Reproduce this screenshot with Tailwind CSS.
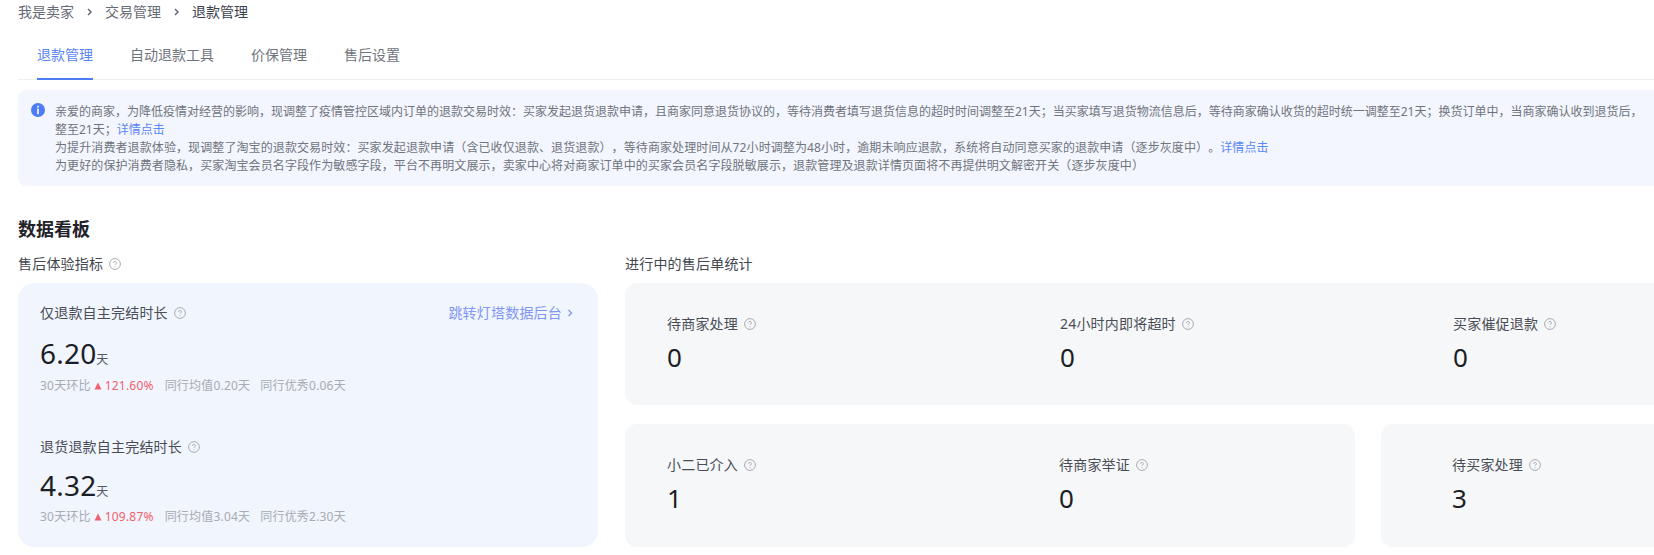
<!doctype html>
<html lang="zh">
<head>
<meta charset="utf-8">
<script src="https://cdn.jsdelivr.net/npm/@tailwindcss/browser@4"></script>
</head>
<body class="bg-white overflow-hidden h-[555px] w-[1654px] font-['Noto_Sans','Noto_Sans_CJK_SC',sans-serif]">
<div class="w-[1900px] pl-[18px]">
  <nav class="h-6 flex items-center gap-[11px] text-sm text-[#666b76]">
    <span>我是卖家</span>
    <svg class="w-[9px] h-[10px]" viewBox="0 0 9 10" fill="none" stroke="currentColor" stroke-width="1.5"><path d="M3 2l3 3-3 3"/></svg>
    <span>交易管理</span>
    <svg class="w-[9px] h-[10px]" viewBox="0 0 9 10" fill="none" stroke="currentColor" stroke-width="1.5"><path d="M3 2l3 3-3 3"/></svg>
    <span class="text-[#3d4250]">退款管理</span>
  </nav>
  <div class="mt-[7px] h-[49px] flex gap-[37px] pl-[19px] border-b border-[#eeeff1] text-sm text-[#70747d]">
    <span class="h-[49px] pt-[14px] border-b-2 border-[#4d7cf5] text-[#5b86f5]">退款管理</span>
    <span class="pt-[14px]">自动退款工具</span>
    <span class="pt-[14px]">价保管理</span>
    <span class="pt-[14px]">售后设置</span>
  </div>
  <div class="mt-[10px] h-24 rounded-lg bg-[#f3f6fe] flex text-xs leading-[18px] text-[#70747d]">
    <svg class="ml-[13px] mt-[13px] w-[14px] h-[14px] shrink-0" viewBox="0 0 14 14"><circle cx="7" cy="7" r="7" fill="#4d7cf5"/><rect x="6.2" y="2.8" width="1.6" height="1.7" fill="#fff"/><rect x="6.2" y="5.6" width="1.6" height="5.6" fill="#fff"/></svg>
    <div class="ml-[10px] pt-[13px] w-[1700px] [text-spacing-trim:space-all]">
      <div class="whitespace-nowrap">亲爱的商家&#65292;为降低疫情对经营的影响&#65292;现调整了疫情管控区域内订单的退款交易时效&#65306;买家发起退货退款申请&#65292;且商家同意退货协议的&#65292;等待消费者填写退货信息的超时时间调整至21天&#65307;当买家填写退货物流信息后&#65292;等待商家确认收货的超时统一调整至21天&#65307;换货订单中&#65292;当商家确认收到退货后&#65292;</div>
      <div>整至21天&#65307;<span class="text-[#5b86f5]">详情点击</span></div>
      <div class="tracking-[0.1px]">为提升消费者退款体验&#65292;现调整了淘宝的退款交易时效&#65306;买家发起退款申请&#65288;含已收仅退款、退货退款&#65289;&#65292;等待商家处理时间从72小时调整为48小时&#65292;逾期未响应退款&#65292;系统将自动同意买家的退款申请&#65288;逐步灰度中&#65289;。<span class="text-[#5b86f5]">详情点击</span></div>
      <div class="tracking-[0.1px]">为更好的保护消费者隐私&#65292;买家淘宝会员名字段作为敏感字段&#65292;平台不再明文展示&#65292;卖家中心将对商家订单中的买家会员名字段脱敏展示&#65292;退款管理及退款详情页面将不再提供明文解密开关&#65288;逐步灰度中&#65289;</div>
    </div>
  </div>
  <h2 class="mt-[31px] text-lg leading-6 font-bold text-[#1f2229]">数据看板</h2>
  <div class="mt-[13px] flex gap-[27px] tracking-[0.2px]">
    <section class="w-[580px] shrink-0">
      <div class="h-5 flex items-center gap-[6px] text-sm text-[#43464f]">售后体验指标
        <svg class="w-3 h-3 text-[#a9acb3]" viewBox="0 0 12 12" fill="none" stroke="currentColor"><circle cx="6" cy="6" r="5.4"/><path d="M4.6 4.8a1.4 1.4 0 1 1 2.1 1.2c-.5.3-.7.5-.7 1.1M6 8.3v.9"/></svg>
      </div>
      <div class="mt-[9px] h-[264px] rounded-2xl bg-[#f1f5fe] px-[22px] pt-[20px]">
        <div class="flex justify-between h-5 items-center text-sm">
          <span class="flex items-center gap-[6px] text-[#4a4d56]">仅退款自主完结时长
            <svg class="w-3 h-3 text-[#a9acb3]" viewBox="0 0 12 12" fill="none" stroke="currentColor"><circle cx="6" cy="6" r="5.4"/><path d="M4.6 4.8a1.4 1.4 0 1 1 2.1 1.2c-.5.3-.7.5-.7 1.1M6 8.3v.9"/></svg>
          </span>
          <span class="flex items-center gap-[4px] text-[#7f96f2]">跳转灯塔数据后台
            <svg class="w-2 h-2 mr-[2px]" viewBox="0 0 8 8" fill="none" stroke="currentColor" stroke-width="1.3"><path d="M2.5 1l3 3-3 3"/></svg>
          </span>
        </div>
        <div class="mt-[9px] h-[42px] flex items-baseline text-[#1b1e25]"><span class="text-[28px] leading-[42px]">6.20</span><span class="text-xs text-[#55585f]">天</span></div>
        <div class="mt-[2px] h-5 flex items-center text-xs text-[#a8abb2]">30天环比
          <svg class="mx-[3px] w-2 h-2" viewBox="0 0 8 8"><path d="M4 0.5L7.5 7.5H0.5z" fill="#f0616d"/></svg>
          <span class="text-[#f0616d]">121.60%</span><span class="ml-[11px]">同行均值0.20天</span><span class="ml-[10px]">同行优秀0.06天</span>
        </div>
        <div class="mt-[41px] h-5 flex items-center gap-[6px] text-sm text-[#4a4d56]">退货退款自主完结时长
          <svg class="w-3 h-3 text-[#a9acb3]" viewBox="0 0 12 12" fill="none" stroke="currentColor"><circle cx="6" cy="6" r="5.4"/><path d="M4.6 4.8a1.4 1.4 0 1 1 2.1 1.2c-.5.3-.7.5-.7 1.1M6 8.3v.9"/></svg>
        </div>
        <div class="mt-[7px] h-[42px] flex items-baseline text-[#1b1e25]"><span class="text-[28px] leading-[42px]">4.32</span><span class="text-xs text-[#55585f]">天</span></div>
        <div class="mt-[1px] h-5 flex items-center text-xs text-[#a8abb2]">30天环比
          <svg class="mx-[3px] w-2 h-2" viewBox="0 0 8 8"><path d="M4 0.5L7.5 7.5H0.5z" fill="#f0616d"/></svg>
          <span class="text-[#f0616d]">109.87%</span><span class="ml-[11px]">同行均值3.04天</span><span class="ml-[10px]">同行优秀2.30天</span>
        </div>
      </div>
    </section>
    <section class="flex-1">
      <div class="h-5 flex items-center text-sm text-[#43464f]">进行中的售后单统计</div>
      <div class="mt-[9px] h-[122px] rounded-xl bg-[#f6f7f9] pl-[42px] pt-[31px] grid grid-cols-[393px_393px_393px]">
        <div><div class="h-5 flex items-center gap-[6px] text-sm text-[#4a4d56]">待商家处理
          <svg class="w-3 h-3 text-[#a9acb3]" viewBox="0 0 12 12" fill="none" stroke="currentColor"><circle cx="6" cy="6" r="5.4"/><path d="M4.6 4.8a1.4 1.4 0 1 1 2.1 1.2c-.5.3-.7.5-.7 1.1M6 8.3v.9"/></svg></div><div class="mt-[5px] text-[26px] leading-[36px] text-[#1b1e25]">0</div></div>
        <div><div class="h-5 flex items-center gap-[6px] text-sm text-[#4a4d56]">24小时内即将超时
          <svg class="w-3 h-3 text-[#a9acb3]" viewBox="0 0 12 12" fill="none" stroke="currentColor"><circle cx="6" cy="6" r="5.4"/><path d="M4.6 4.8a1.4 1.4 0 1 1 2.1 1.2c-.5.3-.7.5-.7 1.1M6 8.3v.9"/></svg></div><div class="mt-[5px] text-[26px] leading-[36px] text-[#1b1e25]">0</div></div>
        <div><div class="h-5 flex items-center gap-[6px] text-sm text-[#4a4d56]">买家催促退款
          <svg class="w-3 h-3 text-[#a9acb3]" viewBox="0 0 12 12" fill="none" stroke="currentColor"><circle cx="6" cy="6" r="5.4"/><path d="M4.6 4.8a1.4 1.4 0 1 1 2.1 1.2c-.5.3-.7.5-.7 1.1M6 8.3v.9"/></svg></div><div class="mt-[5px] text-[26px] leading-[36px] text-[#1b1e25]">0</div></div>
      </div>
      <div class="mt-[19px] flex gap-[26px]">
        <div class="w-[730px] h-[123px] shrink-0 rounded-xl bg-[#f6f7f9] pl-[42px] pt-[31px] grid grid-cols-[392px_296px]">
          <div><div class="h-5 flex items-center gap-[6px] text-sm text-[#4a4d56]">小二已介入
            <svg class="w-3 h-3 text-[#a9acb3]" viewBox="0 0 12 12" fill="none" stroke="currentColor"><circle cx="6" cy="6" r="5.4"/><path d="M4.6 4.8a1.4 1.4 0 1 1 2.1 1.2c-.5.3-.7.5-.7 1.1M6 8.3v.9"/></svg></div><div class="mt-[5px] text-[26px] leading-[36px] text-[#1b1e25]">1</div></div>
          <div><div class="h-5 flex items-center gap-[6px] text-sm text-[#4a4d56]">待商家举证
            <svg class="w-3 h-3 text-[#a9acb3]" viewBox="0 0 12 12" fill="none" stroke="currentColor"><circle cx="6" cy="6" r="5.4"/><path d="M4.6 4.8a1.4 1.4 0 1 1 2.1 1.2c-.5.3-.7.5-.7 1.1M6 8.3v.9"/></svg></div><div class="mt-[5px] text-[26px] leading-[36px] text-[#1b1e25]">0</div></div>
        </div>
        <div class="flex-1 h-[123px] rounded-xl bg-[#f6f7f9] pl-[71px] pt-[31px]">
          <div class="h-5 flex items-center gap-[6px] text-sm text-[#4a4d56]">待买家处理
            <svg class="w-3 h-3 text-[#a9acb3]" viewBox="0 0 12 12" fill="none" stroke="currentColor"><circle cx="6" cy="6" r="5.4"/><path d="M4.6 4.8a1.4 1.4 0 1 1 2.1 1.2c-.5.3-.7.5-.7 1.1M6 8.3v.9"/></svg></div><div class="mt-[5px] text-[26px] leading-[36px] text-[#1b1e25]">3</div>
        </div>
      </div>
    </section>
  </div>
</div>
</body>
</html>
